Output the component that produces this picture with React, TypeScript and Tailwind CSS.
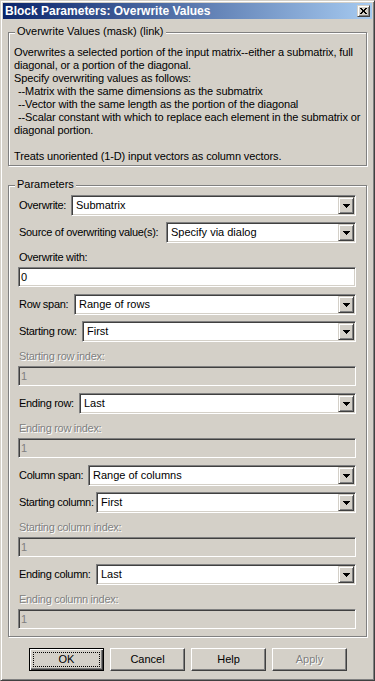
import React from "react";

const sunken =
  "border border-t-[#808080] border-l-[#808080] border-b-white border-r-white shadow-[inset_1px_1px_0_#404040,inset_-1px_-1px_0_#d4d0c8]";
const raised =
  "border border-t-[#d4d0c8] border-l-[#d4d0c8] border-b-[#404040] border-r-[#404040] shadow-[inset_1px_1px_0_#fff,inset_-1px_-1px_0_#808080]";
const pushBtn =
  "border border-t-white border-l-white border-b-[#404040] border-r-[#404040] shadow-[inset_-1px_-1px_0_#808080]";
const disabledText = "text-[#808080] [text-shadow:1px_1px_0_#fff]";

function Arrow() {
  return (
    <svg width="7" height="4" viewBox="0 0 7 4" shapeRendering="crispEdges">
      <rect x="0" y="0" width="7" height="1" fill="#000" />
      <rect x="1" y="1" width="5" height="1" fill="#000" />
      <rect x="2" y="2" width="3" height="1" fill="#000" />
      <rect x="3" y="3" width="1" height="1" fill="#000" />
    </svg>
  );
}

function Combo({
  label,
  lw,
  value,
  className = "",
}: {
  label: string;
  lw: string;
  value: string;
  className?: string;
}) {
  return (
    <div className={`flex h-[21px] items-center ${className}`}>
      <div className={`${lw} shrink-0 whitespace-nowrap pl-[1px] leading-[13px] tracking-[-0.3px]`}>{label}</div>
      <div className={`flex h-[21px] min-w-0 flex-1 items-center bg-white ${sunken}`}>
        <span className="flex-1 whitespace-nowrap pl-[4px] leading-[13px]">{value}</span>
        <div
          className={`mr-[1px] flex h-[17px] w-[16px] shrink-0 items-center justify-center bg-[#d4d0c8] ${raised}`}
        >
          <Arrow />
        </div>
      </div>
    </div>
  );
}

function Label({ text, disabled, className = "" }: { text: string; disabled?: boolean; className?: string }) {
  return (
    <div
      className={`h-[14px] whitespace-nowrap pl-[1px] leading-[14px] tracking-[-0.3px] ${disabled ? disabledText : ""} ${className}`}
    >
      {text}
    </div>
  );
}

function Edit({ value, disabled, className = "" }: { value: string; disabled?: boolean; className?: string }) {
  return (
    <div
      className={`flex h-[20px] items-center pl-[2px] leading-[13px] ${sunken} ${
        disabled ? "bg-[#d4d0c8] text-[#808080]" : "bg-white"
      } ${className}`}
    >
      {value}
    </div>
  );
}

function Group({
  legend,
  className = "",
  children,
}: {
  legend: string;
  className?: string;
  children: React.ReactNode;
}) {
  return (
    <div
      className={`relative ml-[5px] w-[359px] border border-[#808080] shadow-[inset_1px_1px_0_#fff,1px_1px_0_#fff] ${className}`}
    >
      <span className="absolute left-[6px] top-[-8px] whitespace-nowrap bg-[#d4d0c8] px-[2px] leading-[13px]">
        {legend}
      </span>
      {children}
    </div>
  );
}

function CloseGlyph() {
  const px: [number, number][] = [
    [0, 0], [1, 0], [5, 0], [6, 0],
    [1, 1], [2, 1], [4, 1], [5, 1],
    [2, 2], [3, 2], [4, 2],
    [2, 3], [3, 3], [4, 3],
    [1, 4], [2, 4], [4, 4], [5, 4],
    [0, 5], [1, 5], [5, 5], [6, 5],
  ];
  return (
    <svg width="7" height="6" viewBox="0 0 7 6" shapeRendering="crispEdges">
      {px.map(([x, y], i) => (
        <rect key={i} x={x} y={y} width="1" height="1" fill="#000" />
      ))}
    </svg>
  );
}

function PushButton({
  label,
  isDefault,
  disabled,
}: {
  label: string;
  isDefault?: boolean;
  disabled?: boolean;
}) {
  if (isDefault) {
    return (
      <div className="relative flex h-[23px] w-[75px] items-center justify-center border border-black bg-[#d4d0c8] shadow-[inset_1px_1px_0_#fff,inset_-1px_-1px_0_#404040,inset_-2px_-2px_0_#808080]">
        <div className="absolute inset-[3px] border border-dotted border-black" />
        <span className="leading-[13px]">{label}</span>
      </div>
    );
  }
  return (
    <div className={`flex h-[23px] w-[75px] items-center justify-center bg-[#d4d0c8] ${pushBtn}`}>
      <span className={`leading-[13px] ${disabled ? disabledText : ""}`}>{label}</span>
    </div>
  );
}

export default function App() {
  const lines = [
    { t: "Overwrites a selected portion of the input matrix--either a submatrix, full", i: false },
    { t: "diagonal, or a portion of the diagonal.", i: false },
    { t: "Specify overwriting values as follows:", i: false },
    { t: "--Matrix with the same dimensions as the submatrix", i: true },
    { t: "--Vector with the same length as the portion of the diagonal", i: true },
    { t: "--Scalar constant with which to replace each element in the submatrix or", i: true },
    { t: "diagonal portion.", i: false },
    { t: "\u00a0", i: false },
    { t: "Treats unoriented (1-D) input vectors as column vectors.", i: false },
  ];
  return (
    <div className="flex h-[681px] w-[375px] flex-col overflow-hidden border border-t-[#d4d0c8] border-l-[#d4d0c8] border-b-[#404040] border-r-[#404040] bg-[#d4d0c8] p-[2px] text-[11px] text-black shadow-[inset_1px_1px_0_#fff,inset_-1px_-1px_0_#808080] [font-family:'Liberation_Sans',Arial,sans-serif]">
      {/* Title bar */}
      <div className="flex h-[16px] shrink-0 items-center bg-[linear-gradient(to_right,#0a246a,#a6caf0)] pl-[2px] pr-[2px]">
        <span className="whitespace-nowrap text-[12px] font-bold leading-[14px] text-white">
          Block Parameters: Overwrite Values
        </span>
        <div className={`ml-auto flex h-[12px] w-[13px] items-center justify-center bg-[#d4d0c8] ${raised}`}>
          <CloseGlyph />
        </div>
      </div>

      {/* Description group */}
      <Group legend="Overwrite Values (mask) (link)" className="mt-[13px] pb-[2px] pl-[5px] pt-[13px]">
        {lines.map((l, k) => (
          <div key={k} className={`whitespace-nowrap leading-[13px] tracking-[-0.12px] ${l.i ? "pl-[4px]" : ""}`}>
            {l.t}
          </div>
        ))}
      </Group>

      {/* Parameters group */}
      <Group legend="Parameters" className="mt-[19px] pb-[7px] pl-[9px] pr-[10px] pt-[9px]">
        <Combo label="Overwrite:" lw="w-[53px]" value="Submatrix" />
        <Combo label="Source of overwriting value(s):" lw="w-[148px]" value="Specify via dialog" className="mt-[6px]" />
        <Label text="Overwrite with:" className="mt-[7px]" />
        <Edit value="0" className="mt-[3px]" />
        <Combo label="Row span:" lw="w-[56px]" value="Range of rows" className="mt-[7px]" />
        <Combo label="Starting row:" lw="w-[64px]" value="First" className="mt-[6px]" />
        <Label text="Starting row index:" disabled className="mt-[7px]" />
        <Edit value="1" disabled className="mt-[3px]" />
        <Combo label="Ending row:" lw="w-[61px]" value="Last" className="mt-[7px]" />
        <Label text="Ending row index:" disabled className="mt-[7px]" />
        <Edit value="1" disabled className="mt-[3px]" />
        <Combo label="Column span:" lw="w-[70px]" value="Range of columns" className="mt-[7px]" />
        <Combo label="Starting column:" lw="w-[78px]" value="First" className="mt-[6px]" />
        <Label text="Starting column index:" disabled className="mt-[7px]" />
        <Edit value="1" disabled className="mt-[3px]" />
        <Combo label="Ending column:" lw="w-[78px]" value="Last" className="mt-[7px]" />
        <Label text="Ending column index:" disabled className="mt-[7px]" />
        <Edit value="1" disabled className="mt-[3px]" />
      </Group>

      {/* Buttons */}
      <div className="mt-[11px] flex gap-[6px] pl-[26px]">
        <PushButton label="OK" isDefault />
        <PushButton label="Cancel" />
        <PushButton label="Help" />
        <PushButton label="Apply" disabled />
      </div>
    </div>
  );
}
